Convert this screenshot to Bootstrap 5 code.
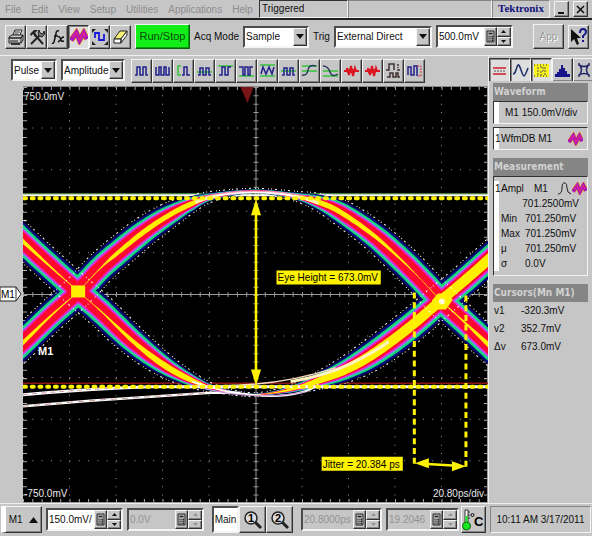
<!DOCTYPE html>
<html lang="en">
<head>
<meta charset="utf-8">
<meta name="viewport" content="width=device-width, initial-scale=1">
<title>Tektronix oscilloscope</title>
<link href="https://cdn.jsdelivr.net/npm/bootstrap@5.3.0/dist/css/bootstrap.min.css" rel="stylesheet">
<style>
  :root { --face:#c6c6c6; --hi:#f4f4f4; --lo:#858585; --ink:#101010; }
  body { background:var(--face); color:var(--ink); font:10px/15px "Liberation Sans",Arial,sans-serif; }
  button, input, select { font:inherit; color:inherit; border-radius:0; }
  .menubar { height:20px; border-bottom:2px solid #222; }
  .menubar nav { width:259px; padding-left:5px; gap:10px; }
  .menubar nav a { color:#8d8d8d; text-decoration:none; }
  .sunk { border:2px solid; border-color:#4c4c4c var(--hi) var(--hi) #4c4c4c; }
  .thin { border:1px solid; border-color:var(--lo) var(--hi) var(--hi) var(--lo); }
  .raised { background:var(--face); border:1px solid; border-color:var(--hi) #333 #333 var(--hi); box-shadow:inset -1px -1px var(--lo); padding:0; }
  .tool { width:21px; height:24px; display:flex; align-items:center; justify-content:center; flex:none; }
  .tool svg { display:block; }
  .down { background:#dedede; border-color:#333 var(--hi) var(--hi) #333; box-shadow:inset 1px 1px var(--lo); }
  .fname { width:89px; padding-left:2px; border-color:#333 var(--hi) var(--hi) #333; }
  .brand-box { width:58px; color:#11117c; font:bold 11px/15px "Liberation Serif",serif; }
  .win { width:15px; height:16px; }
  .bar1 { height:36px; padding:0 3px 2px 5px; border-bottom:1px solid #eee; }
  .run { width:55px; height:25px; background:#12ee18; color:#064a08; border-right-color:#0a620c; border-bottom-color:#0a620c; box-shadow:inset -1px -1px #0c9a10; font-size:11px; }
  .app-btn { width:31px; height:25px; color:#999; text-shadow:1px 1px #fff; }
  .combo { display:flex; height:22px; background:#fff; }
  .combo select { appearance:none; border:0; background:none; padding:0 0 0 1px; min-width:0; flex:1; outline:0; }
  .combo .raised { width:14px; display:flex; align-items:center; justify-content:center; pointer-events:none; flex:none; }
  .num { display:flex; height:23px; background:#fff; }
  .num input { border:0; background:none; padding:0 0 0 1px; min-width:0; width:20px; flex:1; outline:0; }
  .num.off { background:var(--face); }
  .num.off input { color:#929292; }
  .num.off .spin { color:#929292; }
  .calc { width:13px; flex:none; display:flex; align-items:center; justify-content:center; }
  .spin { width:14px; flex:none; display:flex; flex-direction:column; }
  .spin button { flex:1; display:flex; align-items:center; justify-content:center; min-height:0; }
  .w46 { width:46px; } .w64 { width:64px; } .w66 { width:66px; } .w98 { width:98px; } .w77 { width:77px; } .w81 { width:81px; } .w73 { width:73px; }
  .bar2 { height:30px; padding:3px 0 2px 11px; gap:4px; }
  .measures { padding-left:2px; }
  .side { width:104px; flex:none; border-left:1px solid #eee; }
  .side .icons { height:25px; padding-top:2px; }
  .panels { padding:2px 4px 0 4px; }
  .panels h2 { margin:0; background:#858585; color:#d2d2d2; font:bold 10px/18px "DejaVu Sans Condensed","DejaVu Sans",sans-serif; padding:0 1px; white-space:nowrap; }
  .box { border:1px solid; border-color:#333 var(--hi) var(--hi) #333; display:flex; white-space:nowrap; }
  .strip { width:7px; background:linear-gradient(90deg,#fff 5px,transparent 5px); flex:none; padding-left:1px; }
  .line23 { height:23px; line-height:21px; margin-bottom:3px; }
  .panels table { width:100%; line-height:15px; }
  .panels th { font-weight:400; width:24px; }
  .panels td, .panels th { padding:0; white-space:nowrap; }
  .panels .cursors { line-height:18px; }
  .panels .cursors th { width:28px; padding-left:1px; }
  .gutter { width:23px; flex:none; }
  .marker { width:22px; }
  .plot { background:#000; }
  .plot svg { display:block; width:100%; height:auto; }
  .footbar { height:33px; border-top:1px solid #eee; padding:2px 1px 3px 1px; }
  .tall { height:27px; }
  .m1 { width:41px; border-left:5px solid #fff; }
  .main-btn { width:27px; background:#fff; }
  .mag { width:27px; }
  .temp { width:25px; margin-left:2px; }
</style>
<script src="https://cdn.jsdelivr.net/npm/bootstrap@5.3.0/dist/js/bootstrap.bundle.min.js"></script>
</head>
<body class="d-flex flex-column min-vh-100 overflow-hidden">

<svg width="0" height="0" class="position-absolute" aria-hidden="true">
  <symbol id="arr" viewBox="0 0 8 5"><path d="M0 0h8L4 5z" fill="#111"/></symbol>
  <symbol id="up" viewBox="0 0 5 3"><path d="M0 3h5L2.500 0z" fill="currentColor"/></symbol>
  <symbol id="dn" viewBox="0 0 5 3"><path d="M0 0h5L2.500 3z" fill="currentColor"/></symbol>
  <symbol id="calc" viewBox="0 0 9 12"><path d="M1 .5h7v11H1z" fill="#bbb" stroke="#222"/><path d="M2.500 3h4M2.500 6h1M4.500 6h1M6 6h1M2.500 8h1M4.500 8h1M6 8h1M2.500 10h1M4.500 10h1M6 10h1" stroke="#222" stroke-width="1.300"/></symbol>
  <symbol id="db" viewBox="0 0 17 15"><path d="M1 11L6 4l3 7 4-7 3 6" fill="none" stroke="#e8902a" stroke-width="5.500"/><path d="M1 11L6 4l3 7 4-7 3 6" fill="none" stroke="#a312c4" stroke-width="4"/><path d="M2 9l4-5 3 7 4-7 2 4" fill="none" stroke="#e0248c" stroke-width="1.500"/></symbol>
</svg>

<header class="menubar d-flex align-items-center flex-shrink-0">
  <nav class="d-flex flex-shrink-0" aria-label="Main menu">
    <a href="#">File</a><a href="#">Edit</a><a href="#">View</a><a href="#">Setup</a><a href="#">Utilities</a><a href="#">Applications</a><a href="#">Help</a>
  </nav>
  <div class="fname thin h-100 flex-shrink-0">Triggered</div>
  <div class="thin h-100 flex-grow-1"></div>
  <div class="brand-box thin h-100 text-center flex-shrink-0">Tektronix</div>
  <div class="d-flex gap-1 ps-1 pe-1 flex-shrink-0">
    <button class="raised win d-flex align-items-center justify-content-center" aria-label="Minimize"><svg width="9" height="9"><path d="M1 8h6" stroke="#111" stroke-width="2"/></svg></button>
    <button class="raised win d-flex align-items-center justify-content-center" aria-label="Close"><svg width="9" height="9"><path d="M1 1l7 7M8 1L1 8" stroke="#111" stroke-width="1.600"/></svg></button>
  </div>
</header>

<div class="bar1 d-flex align-items-center flex-shrink-0" role="toolbar" aria-label="Acquisition">
  <button class="raised tool" aria-label="Print"><svg width="18" height="18"><path d="M6 7l2-5h7l-2 5" fill="#fff" stroke="#222"/><path d="M2 9l3-2h11l-2 3H2zM2 10h12v5H2zM14 10l2-3v5l-2 3" fill="#ccc" stroke="#222"/><path d="M3 13h8M8 4h5M7.500 6h4" stroke="#222"/><path d="M4 16h9" stroke="#333" stroke-width="2"/></svg></button>
  <button class="raised tool" aria-label="Setup"><svg width="18" height="18"><path d="M3 16L13 6M7 7l8 9" stroke="#222" stroke-width="2"/><path d="M2 6l4-4h4L7 5l2 2-2 2-2-3-2 2z" fill="#222"/><path d="M11 2l1 3 3 1 1-3 1 3-3 3-3-1-1-3z" fill="#777" stroke="#222"/></svg></button>
  <button class="raised tool" aria-label="Math"><svg width="16" height="18"><path d="M9 3Q6 2 6 6L4 14Q3 16 2 15M4 8h4M8 9q2-1 2.500 2T14 13M14 9q-2 0-3 2t-3 3" fill="none" stroke="#111" stroke-width="1.500"/></svg></button>
  <button class="raised tool down" aria-label="Waveform database"><svg width="18" height="17"><use href="#db"/></svg></button>
  <button class="raised tool" aria-label="Autoset"><svg width="18" height="18"><path d="M1 5V1h4zM17 5V1h-4zM1 13v4h4zM17 13v4h-4z" fill="#222"/><path d="M4 10V5h4v7h5V6" fill="none" stroke="#1919dc" stroke-width="1.800"/></svg></button>
  <button class="raised tool me-1" aria-label="Clear data"><svg width="17" height="18"><path d="M2 11L8 3h7L9 11z" fill="#f6ef78" stroke="#222"/><path d="M2 11h7v4H2zM9 15l6-8V3L9 11z" fill="#fff" stroke="#222"/></svg></button>
  <button class="raised run me-1 flex-shrink-0">Run/Stop</button>
  <label for="acq" class="me-1 flex-shrink-0">Acq Mode</label>
  <div class="combo sunk w66 flex-shrink-0"><select id="acq"><option>Sample</option></select><span class="raised"><svg width="8" height="5"><use href="#arr"/></svg></span></div>
  <label for="trig" class="ms-1 me-1 flex-shrink-0">Trig</label>
  <div class="combo sunk w98 flex-shrink-0 me-1"><select id="trig"><option>External Direct</option></select><span class="raised"><svg width="8" height="5"><use href="#arr"/></svg></span></div>
  <div class="num sunk w77 flex-shrink-0"><input aria-label="Trigger level" value="500.0mV"><button class="raised calc" aria-label="Keypad"><svg width="9" height="13"><use href="#calc"/></svg></button><span class="spin"><button class="raised" aria-label="Increase"><svg width="5" height="3"><use href="#up"/></svg></button><button class="raised" aria-label="Decrease"><svg width="5" height="3"><use href="#dn"/></svg></button></span></div>
  <button class="raised app-btn ms-auto me-1 flex-shrink-0" disabled>App</button>
  <button class="raised tool" aria-label="Help"><svg width="19" height="20"><path d="M2 2v13l3-3 3 6 2-1-2-6h4z" fill="#111"/><path d="M11 6q0-4 3-4t3 3q0 2-3 4v2M14 13v2" fill="none" stroke="#171788" stroke-width="2"/></svg></button>
</div>

<main class="d-flex flex-grow-1">
  <section class="flex-grow-1 overflow-hidden">
    <div class="bar2 d-flex align-items-start" role="toolbar" aria-label="Measurements">
      <div class="combo sunk w46 flex-shrink-0"><select aria-label="Category"><option>Pulse</option></select><span class="raised"><svg width="8" height="5"><use href="#arr"/></svg></span></div>
      <div class="combo sunk w64 flex-shrink-0"><select aria-label="Group"><option>Amplitude</option></select><span class="raised"><svg width="8" height="5"><use href="#arr"/></svg></span></div>
      <div class="measures d-flex" id="measures"></div>
    </div>
    <div class="d-flex">
      <div class="gutter d-flex align-items-center"><svg class="marker" viewBox="0 0 22 16"><path d="M0 1h16l5 7-5 7H0z" fill="#fff" stroke="#222"/><path d="M16 1v14" stroke="#333"/><text x="1" y="12" font-size="10">M1</text></svg></div>
      <div class="plot flex-grow-1"><svg id="scope" viewBox="23 87 464 416" role="img" aria-label="Eye diagram"></svg></div>
    </div>
  </section>

  <aside class="side">
    <div class="icons d-flex overflow-hidden">
      <button class="raised tool down" aria-label="Cursors"><svg width="17" height="17"><path d="M2 6h13M2 12h13" stroke="#d01e2c" stroke-width="1.500"/><path d="M3 9h12" stroke="#555" stroke-dasharray="2 1"/></svg></button>
      <button class="raised tool down" aria-label="Waveform"><svg width="17" height="17"><path d="M1 12Q3 12 4 8T6 3 9 8t3 6 4-8" fill="none" stroke="#1d2d6a" stroke-width="1.500"/></svg></button>
      <button class="raised tool down" aria-label="Mask"><svg width="17" height="17"><path d="M1 2h15v13H1z" fill="#f7f31b"/><path d="M1 3h15M1 14h15" stroke="#333" stroke-dasharray="1 2"/><path d="M5 5v8M12 5v8M7 5h3v4H8v4h2" stroke="#555" fill="none" stroke-dasharray="2 1"/></svg></button>
      <button class="raised tool" aria-label="Histogram"><svg width="17" height="17"><path d="M1 15v-3h2v-2h2V7h2V3h2v3h2v3h2v3h3v3z" fill="#16168a"/></svg></button>
      <button class="raised tool" aria-label="Eye"><svg width="16" height="18"><path d="M3 2v2q5 3 10 0V2M3 16v-2q5-3 10 0v2M4 5q3 4 0 8M12 5q-3 4 0 8" fill="none" stroke="#26266c" stroke-width="1.500"/></svg></button>
    </div>
    <div class="panels">
      <h2>Waveform</h2>
      <div class="box line23"><span class="strip"></span><span class="ps-1">M1 150.0mV/div</span></div>
      <div class="box line23 mb-2"><span class="strip">1</span><span>WfmDB M1</span><svg class="ms-auto me-1 align-self-center" width="15" height="14"><use href="#db"/></svg></div>
      <h2>Measurement</h2>
      <div class="box mb-2 py-1"><span class="strip">1</span><table>
        <tr><td colspan="2"><span class="d-flex align-items-center justify-content-between"><span>Ampl</span><span>M1</span><svg width="29" height="13"><path d="M0 12Q4 12 4 6t3-5q2 0 2 5t4 6" fill="none" stroke="#222"/><svg x="14" width="15" height="13"><use href="#db"/></svg></svg></span></td></tr>
        <tr><td colspan="2" class="text-end pe-2">701.2500mV</td></tr>
        <tr><th scope="row">Min</th><td>701.250mV</td></tr>
        <tr><th scope="row">Max</th><td>701.250mV</td></tr>
        <tr><th scope="row">μ</th><td>701.250mV</td></tr>
        <tr><th scope="row">σ</th><td>0.0V</td></tr>
      </table></div>
      <h2>Cursors(Mn M1)</h2>
      <table class="cursors">
        <tr><th scope="row">v1</th><td>-320.3mV</td></tr>
        <tr><th scope="row">v2</th><td>352.7mV</td></tr>
        <tr><th scope="row">Δv</th><td>673.0mV</td></tr>
      </table>
    </div>
  </aside>
</main>

<footer class="footbar d-flex align-items-center flex-shrink-0">
  <button class="raised m1 tall me-1 flex-shrink-0">M1 <svg width="9" height="6" class="ms-1"><path d="M0 6h9L4.500 0z" fill="#111"/></svg></button>
  <div class="num sunk w77 me-1 flex-shrink-0"><input aria-label="Scale" value="150.0mV/"><button class="raised calc" aria-label="Keypad"><svg width="9" height="13"><use href="#calc"/></svg></button><span class="spin"><button class="raised" aria-label="Increase"><svg width="5" height="3"><use href="#up"/></svg></button><button class="raised" aria-label="Decrease"><svg width="5" height="3"><use href="#dn"/></svg></button></span></div>
  <div class="num off sunk w77 me-2 flex-shrink-0"><input aria-label="Offset" value="0.0V" disabled><button class="raised calc" aria-label="Keypad"><svg width="9" height="13"><use href="#calc"/></svg></button><span class="spin"><button class="raised" aria-label="Increase" disabled><svg width="5" height="3"><use href="#up"/></svg></button><button class="raised" aria-label="Decrease" disabled><svg width="5" height="3"><use href="#dn"/></svg></button></span></div>
  <button class="sunk main-btn tall p-0 flex-shrink-0">Main</button>
  <button class="raised mag tall flex-shrink-0" aria-label="Magnifier 1"><svg width="20" height="20"><circle cx="8" cy="8" r="6" fill="#ddd" stroke="#222" stroke-width="1.500"/><path d="M12 12l6 6" stroke="#222" stroke-width="3"/><text x="5" y="12" font-size="11" font-weight="bold">1</text></svg></button>
  <button class="raised mag tall me-2 flex-shrink-0" aria-label="Magnifier 2"><svg width="20" height="20"><circle cx="8" cy="8" r="6" fill="#ddd" stroke="#222" stroke-width="1.500"/><path d="M12 12l6 6" stroke="#222" stroke-width="3"/><text x="5" y="12" font-size="11" font-weight="bold">2</text></svg></button>
  <div class="num off sunk w81 me-1 flex-shrink-0"><input aria-label="Time scale" value="20.8000ps" disabled><button class="raised calc" aria-label="Keypad"><svg width="9" height="13"><use href="#calc"/></svg></button><span class="spin"><button class="raised" aria-label="Increase" disabled><svg width="5" height="3"><use href="#up"/></svg></button><button class="raised" aria-label="Decrease" disabled><svg width="5" height="3"><use href="#dn"/></svg></button></span></div>
  <div class="num off sunk w73 flex-shrink-0"><input aria-label="Position" value="19.2046" disabled><button class="raised calc" aria-label="Keypad"><svg width="9" height="13"><use href="#calc"/></svg></button><span class="spin"><button class="raised" aria-label="Increase" disabled><svg width="5" height="3"><use href="#up"/></svg></button><button class="raised" aria-label="Decrease" disabled><svg width="5" height="3"><use href="#dn"/></svg></button></span></div>
  <button class="raised temp tall flex-shrink-0" aria-label="Temperature"><svg width="23" height="24"><path d="M3 2h3v13H3z" fill="#fff" stroke="#333"/><path d="M4.500 8v8" stroke="#15ea1c" stroke-width="2"/><circle cx="4.500" cy="18" r="4" fill="#15ea1c" stroke="#146016"/><path d="M6 4h2M6 7h2M6 10h2" stroke="#333"/><circle cx="10.500" cy="7" r="1.500" fill="none" stroke="#111"/><text x="12" y="18" font-size="13" font-weight="bold">C</text></svg></button>
  <div class="thin tall flex-grow-1 ms-1 d-flex align-items-center justify-content-center text-nowrap">10:11 AM 3/17/2011</div>
</footer>

<script>
/* measurement buttons: [name, guide path (green), trace path, trace colour] */
const measures = [
  ['Amplitude','','M2 13h2V5h3v8h3V5h3v8h2','#20208c'],
  ['Cycles','','M2 5v8h3V5h2v8h3V5h2v8h3V5','#20208c'],
  ['Crossing','M6 4H3v9h3','M7 13h2V5h3v8h3','#20208c'],
  ['Mid','M1 10h15','M2 13h2V6h3v7h3V6h3v7h2','#20208c'],
  ['High','M1 4h15','M2 13h3V5h3v8h3V5h3','#20208c'],
  ['Low','M1 14h15','M1 5h4v8h2V5h3v8h2V5h3','#20208c'],
  ['Max','M1 3h15M1 14h15','M2 12l2-7 3 7 3-7 3 7 2-7','#20208c'],
  ['Mean','M1 9h15','M2 13h2V6h3v7h3V6h3v7h2','#20208c'],
  ['Overshoot','M1 4h15M1 9h15','M1 13Q6 14 7 8t8-4','#263c5c'],
  ['Undershoot','M1 9h15M1 14h15','M1 4q5 0 7 6t8 2','#263c5c'],
  ['Noise','','M1 9h3V6l2 7 2-9 2 10 2-8 1 3h3M4 8h9M4 10h8','#dd1520'],
  ['Signal to noise','','M1 9h3V6l2 7 2-9 2 10 2-8 1 3h3M4 8h9M4 10h8','#dd1520'],
  ['Peak to peak','','M1 8h3V2h5v6M2 15h3v-4h3v4h3v-4h2v4h2M13 2v2M13 5v1M12 8h3','#403030'],
  ['Gated','','M2 13V5h3v8h3V4h3v10','#20208c']
];
document.getElementById('measures').innerHTML = measures.map(([n,g,t,c], i) =>
  `<button class="raised tool" aria-label="${n}"><svg width="17" height="18"><path d="${g}" fill="none" stroke="#35c53c" stroke-width="1.500"/><path d="${t}" fill="none" stroke="${c}" stroke-width="${c==='#dd1520'?2:1.5}"/>${i===13?'<path d="M11 4h4v10h-4" fill="none" stroke="#d43040" stroke-dasharray="2 1"/>':''}</svg></button>`).join('');

/* band nodes: x, y, half width of the halo, half width of the yellow core */
const falling = [[10,229,15,2.5],[23,242,15,2],[50,267,15,1],[78,292,15,.3],[100,311,15,.6],[133,342,14,2],[163,365,11,3],[190,380,7,2.5],[215,389,3,.5],[250,395,1,0],[285,391,3,1],[318,381,8,3],[345,370,12,4.5],[373,354,15,5],[407,329,16,5],[440,301,15,5],[465,280,15,5],[500,249,15,5]];
const rising = [[10,355,15,2],[23,343,15,2],[50,317,15,1],[78,292,15,.3],[100,269,15,.6],[117,254,15,2],[143,233,14,2.5],[167,217,12,2.5],[190,205,8,2.5],[213,197,4,1],[255,192,2,0],[295,197,4,1],[318,203,8,2.5],[340,213,12,2.5],[373,236,14,2],[400,260,15,1],[420,280,15,.3],[440,301,15,.5],[465,324,15,1],[500,357,15,3]];
const spline = (p) => {
  const out = [];
  for (let i = 1; i < p.length - 2; i++)
    for (let s = 0; s < 12; s++) {
      const t = s / 12;
      out.push(p[i].map((v, k) => { const a=p[i-1][k], c=p[i+1][k], d=p[i+2][k];
        return .5*(2*v+(c-a)*t+(2*a-5*v+4*c-d)*t*t+(3*v-a-3*c+d)*t*t*t); }));
    }
  out.push(p[p.length-2]);
  return out;
};
const extend = (p) => [p[0], ...p, p[p.length-1]];
const edges = (pts, width) => {
  const up = [], down = [];
  pts.forEach((p, i) => {
    const a = pts[Math.max(0,i-1)], b = pts[Math.min(pts.length-1,i+1)];
    const l = Math.hypot(b[0]-a[0], b[1]-a[1]) || 1, nx = -(b[1]-a[1])/l, ny = (b[0]-a[0])/l, w = width(p);
    up.push([p[0]-nx*w, p[1]-ny*w]); down.push([p[0]+nx*w, p[1]+ny*w]);
  });
  return [up, down];
};
const str = (a) => a.map(p => p[0].toFixed(1)+','+p[1].toFixed(1)).join(' ');
const bands = [spline(extend(falling)), spline(extend(rising))];
let g = '';

/* graticule */
for (let i = 1; i < 10; i++) {
  if (i !== 5) {
    g += `<path d="M${23+i*46.4} 88V502" stroke="#999" stroke-dasharray="1 7.300"/>`;
    g += `<path d="M23 ${87.500+i*41.500}H487" stroke="#999" stroke-dasharray="1 8.280"/>`;
  }
}
g += '<path d="M255.500 88V502M23 295H487" stroke="#999" fill="none"/>';
g += '<path d="M255.500 88V502" stroke="#999" stroke-width="5" stroke-dasharray="1 7.300"/><path d="M23 295H487" stroke="#999" stroke-width="5" stroke-dasharray="1 8.280"/>';
g += '<path d="M25 88V502M485 88V502" stroke="#aaa" stroke-width="4" stroke-dasharray="1 7.300"/><path d="M23 89H487M23 501H487" stroke="#aaa" stroke-width="4" stroke-dasharray="1 8.280"/>';
g += '<path d="M23 87.500H487" stroke="#888"/><path d="M23 502.500H487M486.500 87V502" stroke="#999" fill="none"/>';

/* level traces */
g += '<path d="M23 194.500H487" stroke="#4fae4f"/><path d="M23 196H487" stroke="#fff" stroke-width="2"/><path d="M23 383.500H487" stroke="#8a1518" stroke-width="1.500"/>';

/* heat bands, painted from the halo inwards */
[['#07077c',.96],['#12d870',.8],['#45bdd0',.67],['#e02ae0',.6],['#ff0830',.48]].forEach(([c, r]) =>
  bands.forEach(b => { const [u,d] = edges(b, p => p[2]*r); g += `<polygon points="${str(u)} ${str(d.reverse())}" fill="${c}"/>`; }));
bands.forEach(b => { const [u,d] = edges(b, p => Math.max(0,p[3])); g += `<polygon points="${str(u)} ${str(d.reverse())}" fill="#ffee00"/>`; });
bands.forEach(b => edges(b, p => p[2]+1).forEach(e => g += `<polyline points="${str(e)}" fill="none" stroke="#fff" stroke-dasharray="1 3 2 4 1 2"/>`));

/* crossings */
g += '<path d="M71 286h14v12H71z" fill="#fff000"/><path d="M431 301l6-7h8l7 6-7 10h-9z" fill="#fff000"/><circle cx="441" cy="302" r="3" fill="#fffad0"/>';

/* settled rails */
g += '<g fill="none"><path d="M200 200Q255 185 312 201" stroke="#fff" stroke-width="2.500"/><path d="M205 197Q255 187 305 197" stroke="#f0a0b0"/><path d="M195 203Q205 199 215 197M295 197Q305 199 318 204" stroke="#fff3b0" stroke-width="3"/>';
g += '<path d="M23 395Q90 389 150 387H487" stroke="#fff" stroke-width="3"/><path d="M23 395Q90 389 150 387" stroke="#d69ba8" stroke-dasharray="5 4"/>';
g += '<path d="M23 406.500L90 401L210 393H240" stroke="#fff" stroke-width="2.500"/><path d="M23 406.500L90 401L210 393" stroke="#c59c92" stroke-dasharray="6 5"/>';
g += '<path d="M290 382Q325 376 350 364T388 342" stroke="#fff6c0" stroke-width="3"/>';
g += '<path d="M192 382Q225 394 262 396T318 385" stroke="#fff" stroke-width="2"/><path d="M200 388Q255 402 305 392" stroke="#c891d0"/><path d="M205 386Q275 388 335 368" stroke="#f6dcc0" stroke-width="1.500"/></g>';

/* cursors and annotations */
g += '<g stroke="#fff200" fill="none"><path d="M24 199H487M24 387H487" stroke-width="4" stroke-linecap="round" stroke-dasharray="2 5.700"/>';
g += '<path d="M413.500 293V466M465 296V468" stroke-width="3" stroke-dasharray="6 3.700"/><path d="M255.500 210V376M422 464l34 2" stroke-width="2.500"/></g>';
g += '<path d="M255.500 200l5 16h-10zM255.500 386l5-16h-10zM414 463.500l14-5v10zM465 466.500l-14-5v10z" fill="#fff200"/>';
g += '<path d="M240 88h13l-6 16z" fill="#7a1517"/>';
g += '<path d="M276 271h104v14h-104zM321 457h81v14h-81z" fill="#fff200"/>';
g += '<g font-size="10"><text x="277" y="282">Eye Height = 673.0mV</text><text x="322" y="468">Jitter = 20.384 ps</text><g fill="#e8e8e8"><text x="24" y="101">750.0mV</text><text x="24" y="497">-750.0mV</text><text x="432" y="497">20.80ps/div</text></g><text x="38" y="355" fill="#fff" font-size="11" font-weight="bold">M1</text></g>';
document.getElementById('scope').innerHTML = g;
</script>
</body>
</html>
